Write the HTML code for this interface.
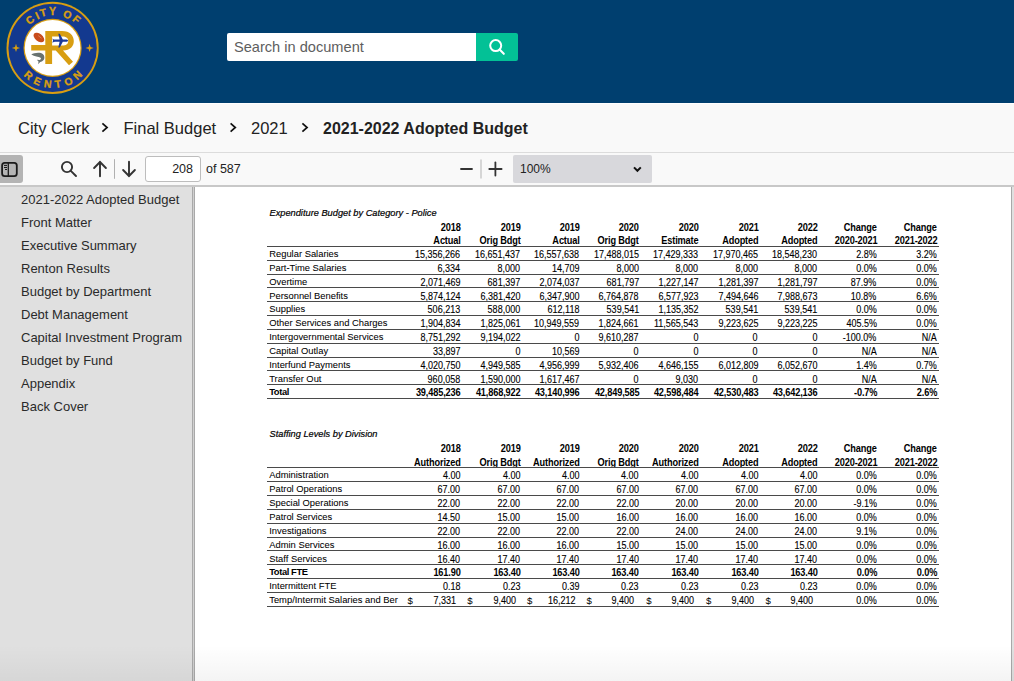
<!DOCTYPE html>
<html><head><meta charset="utf-8">
<style>
*{box-sizing:border-box}
html,body{margin:0;padding:0}
body{width:1014px;height:681px;overflow:hidden;position:relative;background:#fff;font-family:"Liberation Sans",sans-serif}
#hdr{position:absolute;left:0;top:0;width:1014px;height:103px;background:#003f6f}
#logo{position:absolute;left:0;top:0;width:106px;height:96px}
#sbox{position:absolute;left:227px;top:33px;width:249px;height:28px;background:#fff;border-radius:2px 0 0 2px}
#sbox span{position:absolute;left:7px;top:6px;font-size:14.6px;color:#5e5e5e;white-space:nowrap}
#sbtn{position:absolute;left:476px;top:33px;width:42px;height:28px;background:#03c196;border-radius:0 2px 2px 0}
#crumb{position:absolute;left:0;top:103px;width:1014px;height:49px;background:#f9f9f9;border-top:1px solid #fff}
#crumbline{position:absolute;left:0;top:152px;width:1014px;height:1px;background:#dcdcdc}
.cr{position:absolute;top:119.3px;font-size:16.5px;color:#222;white-space:nowrap}
.cr.bd{font-weight:bold;font-size:16px;top:119.8px}
.chev{position:absolute;top:127px;width:6px;height:6px;border-right:1.6px solid #222;border-top:1.6px solid #222;transform:rotate(45deg)}
#tb{position:absolute;left:0;top:153px;width:1014px;height:32px;background:#f9f9f9}
#tbline{position:absolute;left:0;top:185px;width:1014px;height:2px;background:#c8c8c8}
#sbt{position:absolute;left:0;top:155px;width:23px;height:28px;background:#b4b4b4;border-radius:0 3px 3px 0}
#pg{position:absolute;left:145px;top:156px;width:56px;height:26px;background:#fff;border:1px solid #bdbdbd;border-radius:3px}
#pg span{position:absolute;right:7px;top:4.5px;font-size:12.5px;color:#222}
#of{position:absolute;left:206px;top:162px;font-size:12.5px;color:#222}
#zm{position:absolute;left:513px;top:155px;width:139px;height:28px;background:#d8d8dc;border-radius:2px}
#zm span{position:absolute;left:8px;top:7px;font-size:12px;color:#222}
#side{position:absolute;left:0;top:187px;width:192px;height:494px;background:#e0e0e0}
#sl1{position:absolute;left:192px;top:187px;width:1px;height:494px;background:#a9a9a9}
#sl2{position:absolute;left:193px;top:187px;width:1px;height:494px;background:#d0d0d0}
#sl3{position:absolute;left:194px;top:187px;width:1px;height:494px;background:#a9a9a9}
#rl1{position:absolute;left:1011px;top:187px;width:1px;height:494px;background:#a9a9a9}
#rl2{position:absolute;left:1012px;top:187px;width:2px;height:494px;background:#e0e0e0}
.si{position:absolute;left:21px;font-size:13px;color:#2a2a2a;white-space:nowrap}
#paper{position:absolute;left:195px;top:187px;width:816px;height:494px;background:#fff;overflow:hidden}
.c{position:absolute;font-size:10px;line-height:11px;color:#000;white-space:nowrap;letter-spacing:0;-webkit-text-stroke:0.12px #000;transform:scaleX(0.9);transform-origin:100% 50%;margin-top:1px;margin-right:-0.5px}
.c.l{font-size:9.4px;letter-spacing:0;-webkit-text-stroke:0.05px #000;transform:none;margin-top:0;margin-left:-0.8px}
.c.b{font-weight:bold;letter-spacing:-0.15px;-webkit-text-stroke:0;transform:scaleX(0.92);margin-right:-0.9px}
.c.d{transform:none;font-size:9.6px;-webkit-text-stroke:0}
.c.l.b{transform:none;letter-spacing:-0.4px;font-size:9.4px;-webkit-text-stroke:0;margin-top:-0.4px;margin-left:-0.8px}
.ttl{position:absolute;left:269.5px;font-size:9.25px;line-height:11px;font-style:italic;color:#000;-webkit-text-stroke:0.2px #000;white-space:nowrap}
.ln{position:absolute;left:267px;width:672px;height:1px;background:#4a4a4a}
</style></head><body>
<div id="hdr"></div>
<svg id="logo" width="106" height="96" viewBox="0 0 106 96">
  <circle cx="52.6" cy="47.9" r="46.1" fill="#d89e12"/>
  <circle cx="52.6" cy="47.9" r="44.2" fill="#13398f"/>
  <circle cx="52.6" cy="47.9" r="29.1" fill="#d89e12"/>
  <circle cx="52.6" cy="47.9" r="27.9" fill="#fff"/>
  <g font-family="Liberation Sans" font-weight="bold" font-size="10.5" fill="#d89e12" stroke="#d89e12" stroke-width="0.35" text-anchor="middle">
<text x="30" y="23.45" transform="rotate(-38.7 30 19.7)">C</text>
<text x="37.2" y="19.25" transform="rotate(-25.4 37.2 15.5)">I</text>
<text x="43.1" y="16.35" transform="rotate(-15.1 43.1 12.6)">T</text>
<text x="52.6" y="14.95" transform="rotate(0.0 52.6 11.2)">Y</text>
<text x="67.6" y="18.25" transform="rotate(24.2 67.6 14.5)">O</text>
<text x="76.7" y="23.05" transform="rotate(40.1 76.7 19.3)">F</text>
<text x="28.6" y="78.95" transform="rotate(41.3 28.6 75.2)">R</text>
<text x="37.5" y="84.85" transform="rotate(24.5 37.5 81.1)">E</text>
<text x="47.8" y="87.65" transform="rotate(7.6 47.8 83.9)">N</text>
<text x="58" y="87.65" transform="rotate(-8.5 58 83.9)">T</text>
<text x="68.3" y="85.05" transform="rotate(-25.2 68.3 81.3)">O</text>
<text x="77.5" y="78.85" transform="rotate(-42.5 77.5 75.1)">N</text>
  </g>
  <path d="M16 43.7 L17 46.9 L20.2 47.9 L17 48.9 L16 52.1 L15 48.9 L11.8 47.9 L15 46.9 Z" fill="#d89e12"/>
  <path d="M89.6 43.7 L90.6 46.9 L93.8 47.9 L90.6 48.9 L89.6 52.1 L88.6 48.9 L85.4 47.9 L88.6 46.9 Z" fill="#d89e12"/>
  <path fill="#d89e12" d="M45.3 30.9 L62 30.9 C70 30.9 73.8 35.5 73.8 41 C73.8 46.3 70.3 50.4 63 50.5 L73 61.8 L69 65.2 L55.8 50.5 L52.1 50.5 L52.1 63.9 L45.3 63.9 L45.3 50.4 L31.2 50.4 L31.2 45 L45.3 45 Z M52.1 36.5 L52.1 45.6 L62 45.6 C66.5 45.6 68.2 43.8 68.2 41 C68.2 38.2 66.5 36.5 62 36.5 Z"/>
  <path fill="#1b3a9a" d="M52.4 38.6 L53.8 39.4 L55 39.5 L59.6 39.5 L58.3 33.8 L59.8 33.8 L62.8 39.5 L66.8 39.6 C68.5 39.9 68.5 41.5 66.8 41.7 L62.8 41.8 L59.8 47.5 L58.3 47.5 L59.6 41.8 L55 41.8 L53.8 41.9 L52.4 42.7 L53.1 40.6 Z"/>
  <ellipse cx="38.9" cy="37.5" rx="6.2" ry="3.7" transform="rotate(38 38.9 37.5)" fill="#c84c1b"/>
  <path d="M38.2 35.6 L41.5 38.2" stroke="#e9a080" stroke-width="0.6"/>
  <path fill="#687270" d="M31.3 54.5 C33.5 53 37.5 52.2 41 53 C43.8 53.8 44.8 56.5 44.3 58.6 C43.8 60.3 42.6 61.3 41.2 61.8 L40.2 62.1 L38.2 64.2 L38.5 61.5 L36.8 59.8 L39.8 60.1 C41 59.3 41.2 58.3 40.6 57.7 C38.5 56.7 34.5 56.5 31.3 54.5 Z"/>
</svg>
<div id="sbox"><span>Search in document</span></div>
<div id="sbtn"><svg width="42" height="28" viewBox="0 0 42 28"><circle cx="19.7" cy="12.6" r="5.5" fill="none" stroke="#fff" stroke-width="2"/><line x1="23.6" y1="16.6" x2="27.8" y2="20.8" stroke="#fff" stroke-width="2.1" stroke-linecap="round"/></svg></div>

<div id="crumb"></div>
<div id="crumbline"></div>
<div class="cr" style="left:18px">City Clerk</div>
<div class="cr" style="left:123.5px">Final Budget</div>
<div class="cr" style="left:251px">2021</div>
<svg style="position:absolute;left:0;top:110px" width="340" height="40" viewBox="0 110 340 40"><polyline points="102.4,123.4 107.1,127.5 102.4,131.6" fill="none" stroke="#111" stroke-width="1.7"/><polyline points="230.6,123.4 235.3,127.5 230.6,131.6" fill="none" stroke="#111" stroke-width="1.7"/><polyline points="302.4,123.4 307.1,127.5 302.4,131.6" fill="none" stroke="#111" stroke-width="1.7"/></svg>
<div class="cr bd" style="left:323px">2021-2022 Adopted Budget</div>

<div id="tb"></div>
<div id="tbline"></div>
<div id="sbt"><svg width="23" height="28" viewBox="0 0 23 28"><rect x="2.1" y="7.9" width="14.7" height="13.3" rx="2.6" fill="none" stroke="#1a1a1a" stroke-width="1.8"/><line x1="8.3" y1="8" x2="8.3" y2="21.2" stroke="#1a1a1a" stroke-width="1.3"/><line x1="4" y1="10.4" x2="7" y2="10.4" stroke="#1a1a1a" stroke-width="1.1"/><line x1="4" y1="12.5" x2="7" y2="12.5" stroke="#1a1a1a" stroke-width="1.1"/><line x1="5" y1="14.5" x2="7" y2="14.5" stroke="#1a1a1a" stroke-width="1.1"/></svg></div>
<svg style="position:absolute;left:55px;top:155px" width="90" height="28" viewBox="0 0 90 28">
  <circle cx="12" cy="12" r="5.1" fill="none" stroke="#333" stroke-width="1.9"/>
  <line x1="15.8" y1="15.8" x2="21" y2="21" stroke="#333" stroke-width="1.9" stroke-linecap="round"/>
  <path d="M45 6.8 L45 21.3 M39.1 13 L45 7 L50.9 13" fill="none" stroke="#333" stroke-width="1.9" stroke-linecap="round" stroke-linejoin="round"/>
  <line x1="59.5" y1="4.2" x2="59.5" y2="23.8" stroke="#b0b0b0" stroke-width="1"/>
  <path d="M74 6.8 L74 21.2 M68.1 15 L74 21 L79.9 15" fill="none" stroke="#333" stroke-width="1.9" stroke-linecap="round" stroke-linejoin="round"/>
</svg>
<div id="pg"><span>208</span></div>
<div id="of">of 587</div>
<svg style="position:absolute;left:455px;top:155px" width="56" height="28" viewBox="0 0 56 28">
  <line x1="6" y1="14" x2="17" y2="14" stroke="#333" stroke-width="1.8" stroke-linecap="round"/>
  <line x1="26" y1="4.5" x2="26" y2="23.5" stroke="#cdcdcd" stroke-width="1.6"/>
  <line x1="34.3" y1="14" x2="46.6" y2="14" stroke="#333" stroke-width="1.8" stroke-linecap="round"/>
  <line x1="40.4" y1="7.5" x2="40.4" y2="20.6" stroke="#333" stroke-width="1.8" stroke-linecap="round"/>
</svg>
<div id="zm"><span style="left:7px">100%</span><svg style="position:absolute;left:119px;top:10px" width="12" height="8" viewBox="0 0 12 8"><path d="M2 2.4 L5.4 5.8 L8.8 2.4" fill="none" stroke="#111" stroke-width="2"/></svg></div>

<div id="side"></div>
<div id="sl1"></div><div id="sl2"></div><div id="sl3"></div>
<div class="si" style="top:192px">2021-2022 Adopted Budget</div>
<div class="si" style="top:215px">Front Matter</div>
<div class="si" style="top:238px">Executive Summary</div>
<div class="si" style="top:261px">Renton Results</div>
<div class="si" style="top:284px">Budget by Department</div>
<div class="si" style="top:307px">Debt Management</div>
<div class="si" style="top:330px">Capital Investment Program</div>
<div class="si" style="top:353px">Budget by Fund</div>
<div class="si" style="top:376px">Appendix</div>
<div class="si" style="top:399px">Back Cover</div>
<div id="paper"></div>
<div id="rl1"></div><div id="rl2"></div>
<div class="ttl" style="top:208.3px">Expenditure Budget by Category - Police</div>
<div class="c b" style="right:554px;top:220.5px">2018</div>
<div class="c b" style="right:554px;top:234.3px">Actual</div>
<div class="c b" style="right:494.4px;top:220.5px">2019</div>
<div class="c b" style="right:494.4px;top:234.3px">Orig Bdgt</div>
<div class="c b" style="right:435.20000000000005px;top:220.5px">2019</div>
<div class="c b" style="right:435.20000000000005px;top:234.3px">Actual</div>
<div class="c b" style="right:375.79999999999995px;top:220.5px">2020</div>
<div class="c b" style="right:375.79999999999995px;top:234.3px">Orig Bdgt</div>
<div class="c b" style="right:316.29999999999995px;top:220.5px">2020</div>
<div class="c b" style="right:316.29999999999995px;top:234.3px">Estimate</div>
<div class="c b" style="right:256.5px;top:220.5px">2021</div>
<div class="c b" style="right:256.5px;top:234.3px">Adopted</div>
<div class="c b" style="right:197px;top:220.5px">2022</div>
<div class="c b" style="right:197px;top:234.3px">Adopted</div>
<div class="c b" style="right:137.79999999999995px;top:220.5px">Change</div>
<div class="c b" style="right:137.79999999999995px;top:234.3px">2020-2021</div>
<div class="c b" style="right:77.70000000000005px;top:220.5px">Change</div>
<div class="c b" style="right:77.70000000000005px;top:234.3px">2021-2022</div>
<div class="ln" style="top:245.9px"></div>
<div class="c l" style="left:270px;top:248.1px">Regular Salaries</div>
<div class="c" style="right:554px;top:248.1px">15,356,266</div>
<div class="c" style="right:494.4px;top:248.1px">16,651,437</div>
<div class="c" style="right:435.20000000000005px;top:248.1px">16,557,638</div>
<div class="c" style="right:375.79999999999995px;top:248.1px">17,488,015</div>
<div class="c" style="right:316.29999999999995px;top:248.1px">17,429,333</div>
<div class="c" style="right:256.5px;top:248.1px">17,970,465</div>
<div class="c" style="right:197px;top:248.1px">18,548,230</div>
<div class="c" style="right:137.79999999999995px;top:248.1px">2.8%</div>
<div class="c" style="right:77.70000000000005px;top:248.1px">3.2%</div>
<div class="ln" style="top:259.7px"></div>
<div class="c l" style="left:270px;top:261.9px">Part-Time Salaries</div>
<div class="c" style="right:554px;top:261.9px">6,334</div>
<div class="c" style="right:494.4px;top:261.9px">8,000</div>
<div class="c" style="right:435.20000000000005px;top:261.9px">14,709</div>
<div class="c" style="right:375.79999999999995px;top:261.9px">8,000</div>
<div class="c" style="right:316.29999999999995px;top:261.9px">8,000</div>
<div class="c" style="right:256.5px;top:261.9px">8,000</div>
<div class="c" style="right:197px;top:261.9px">8,000</div>
<div class="c" style="right:137.79999999999995px;top:261.9px">0.0%</div>
<div class="c" style="right:77.70000000000005px;top:261.9px">0.0%</div>
<div class="ln" style="top:273.5px"></div>
<div class="c l" style="left:270px;top:275.7px">Overtime</div>
<div class="c" style="right:554px;top:275.7px">2,071,469</div>
<div class="c" style="right:494.4px;top:275.7px">681,397</div>
<div class="c" style="right:435.20000000000005px;top:275.7px">2,074,037</div>
<div class="c" style="right:375.79999999999995px;top:275.7px">681,797</div>
<div class="c" style="right:316.29999999999995px;top:275.7px">1,227,147</div>
<div class="c" style="right:256.5px;top:275.7px">1,281,397</div>
<div class="c" style="right:197px;top:275.7px">1,281,797</div>
<div class="c" style="right:137.79999999999995px;top:275.7px">87.9%</div>
<div class="c" style="right:77.70000000000005px;top:275.7px">0.0%</div>
<div class="ln" style="top:287.4px"></div>
<div class="c l" style="left:270px;top:289.6px">Personnel Benefits</div>
<div class="c" style="right:554px;top:289.6px">5,874,124</div>
<div class="c" style="right:494.4px;top:289.6px">6,381,420</div>
<div class="c" style="right:435.20000000000005px;top:289.6px">6,347,900</div>
<div class="c" style="right:375.79999999999995px;top:289.6px">6,764,878</div>
<div class="c" style="right:316.29999999999995px;top:289.6px">6,577,923</div>
<div class="c" style="right:256.5px;top:289.6px">7,494,646</div>
<div class="c" style="right:197px;top:289.6px">7,988,673</div>
<div class="c" style="right:137.79999999999995px;top:289.6px">10.8%</div>
<div class="c" style="right:77.70000000000005px;top:289.6px">6.6%</div>
<div class="ln" style="top:301.2px"></div>
<div class="c l" style="left:270px;top:303.4px">Supplies</div>
<div class="c" style="right:554px;top:303.4px">506,213</div>
<div class="c" style="right:494.4px;top:303.4px">588,000</div>
<div class="c" style="right:435.20000000000005px;top:303.4px">612,118</div>
<div class="c" style="right:375.79999999999995px;top:303.4px">539,541</div>
<div class="c" style="right:316.29999999999995px;top:303.4px">1,135,352</div>
<div class="c" style="right:256.5px;top:303.4px">539,541</div>
<div class="c" style="right:197px;top:303.4px">539,541</div>
<div class="c" style="right:137.79999999999995px;top:303.4px">0.0%</div>
<div class="c" style="right:77.70000000000005px;top:303.4px">0.0%</div>
<div class="ln" style="top:315.0px"></div>
<div class="c l" style="left:270px;top:317.2px">Other Services and Charges</div>
<div class="c" style="right:554px;top:317.2px">1,904,834</div>
<div class="c" style="right:494.4px;top:317.2px">1,825,061</div>
<div class="c" style="right:435.20000000000005px;top:317.2px">10,949,559</div>
<div class="c" style="right:375.79999999999995px;top:317.2px">1,824,661</div>
<div class="c" style="right:316.29999999999995px;top:317.2px">11,565,543</div>
<div class="c" style="right:256.5px;top:317.2px">9,223,625</div>
<div class="c" style="right:197px;top:317.2px">9,223,225</div>
<div class="c" style="right:137.79999999999995px;top:317.2px">405.5%</div>
<div class="c" style="right:77.70000000000005px;top:317.2px">0.0%</div>
<div class="ln" style="top:328.8px"></div>
<div class="c l" style="left:270px;top:331.0px">Intergovernmental Services</div>
<div class="c" style="right:554px;top:331.0px">8,751,292</div>
<div class="c" style="right:494.4px;top:331.0px">9,194,022</div>
<div class="c" style="right:435.20000000000005px;top:331.0px">0</div>
<div class="c" style="right:375.79999999999995px;top:331.0px">9,610,287</div>
<div class="c" style="right:316.29999999999995px;top:331.0px">0</div>
<div class="c" style="right:256.5px;top:331.0px">0</div>
<div class="c" style="right:197px;top:331.0px">0</div>
<div class="c" style="right:137.79999999999995px;top:331.0px">-100.0%</div>
<div class="c" style="right:77.70000000000005px;top:331.0px">N/A</div>
<div class="ln" style="top:342.6px"></div>
<div class="c l" style="left:270px;top:344.8px">Capital Outlay</div>
<div class="c" style="right:554px;top:344.8px">33,897</div>
<div class="c" style="right:494.4px;top:344.8px">0</div>
<div class="c" style="right:435.20000000000005px;top:344.8px">10,569</div>
<div class="c" style="right:375.79999999999995px;top:344.8px">0</div>
<div class="c" style="right:316.29999999999995px;top:344.8px">0</div>
<div class="c" style="right:256.5px;top:344.8px">0</div>
<div class="c" style="right:197px;top:344.8px">0</div>
<div class="c" style="right:137.79999999999995px;top:344.8px">N/A</div>
<div class="c" style="right:77.70000000000005px;top:344.8px">N/A</div>
<div class="ln" style="top:356.5px"></div>
<div class="c l" style="left:270px;top:358.7px">Interfund Payments</div>
<div class="c" style="right:554px;top:358.7px">4,020,750</div>
<div class="c" style="right:494.4px;top:358.7px">4,949,585</div>
<div class="c" style="right:435.20000000000005px;top:358.7px">4,956,999</div>
<div class="c" style="right:375.79999999999995px;top:358.7px">5,932,406</div>
<div class="c" style="right:316.29999999999995px;top:358.7px">4,646,155</div>
<div class="c" style="right:256.5px;top:358.7px">6,012,809</div>
<div class="c" style="right:197px;top:358.7px">6,052,670</div>
<div class="c" style="right:137.79999999999995px;top:358.7px">1.4%</div>
<div class="c" style="right:77.70000000000005px;top:358.7px">0.7%</div>
<div class="ln" style="top:370.3px"></div>
<div class="c l" style="left:270px;top:372.5px">Transfer Out</div>
<div class="c" style="right:554px;top:372.5px">960,058</div>
<div class="c" style="right:494.4px;top:372.5px">1,590,000</div>
<div class="c" style="right:435.20000000000005px;top:372.5px">1,617,467</div>
<div class="c" style="right:375.79999999999995px;top:372.5px">0</div>
<div class="c" style="right:316.29999999999995px;top:372.5px">9,030</div>
<div class="c" style="right:256.5px;top:372.5px">0</div>
<div class="c" style="right:197px;top:372.5px">0</div>
<div class="c" style="right:137.79999999999995px;top:372.5px">N/A</div>
<div class="c" style="right:77.70000000000005px;top:372.5px">N/A</div>
<div class="ln" style="top:384.1px"></div>
<div class="c l b" style="left:270px;top:386.3px">Total</div>
<div class="c b" style="right:554px;top:386.3px">39,485,236</div>
<div class="c b" style="right:494.4px;top:386.3px">41,868,922</div>
<div class="c b" style="right:435.20000000000005px;top:386.3px">43,140,996</div>
<div class="c b" style="right:375.79999999999995px;top:386.3px">42,849,585</div>
<div class="c b" style="right:316.29999999999995px;top:386.3px">42,598,484</div>
<div class="c b" style="right:256.5px;top:386.3px">42,530,483</div>
<div class="c b" style="right:197px;top:386.3px">43,642,136</div>
<div class="c b" style="right:137.79999999999995px;top:386.3px">-0.7%</div>
<div class="c b" style="right:77.70000000000005px;top:386.3px">2.6%</div>
<div class="ln" style="top:397.9px"></div>
<div class="ttl" style="top:429.29999999999995px">Staffing Levels by Division</div>
<div class="c b" style="right:554px;top:441.7px">2018</div>
<div class="c b" style="right:554px;top:455.5px">Authorized</div>
<div class="c b" style="right:494.4px;top:441.7px">2019</div>
<div class="c b" style="right:494.4px;top:455.5px">Orig Bdgt</div>
<div class="c b" style="right:435.20000000000005px;top:441.7px">2019</div>
<div class="c b" style="right:435.20000000000005px;top:455.5px">Authorized</div>
<div class="c b" style="right:375.79999999999995px;top:441.7px">2020</div>
<div class="c b" style="right:375.79999999999995px;top:455.5px">Orig Bdgt</div>
<div class="c b" style="right:316.29999999999995px;top:441.7px">2020</div>
<div class="c b" style="right:316.29999999999995px;top:455.5px">Authorized</div>
<div class="c b" style="right:256.5px;top:441.7px">2021</div>
<div class="c b" style="right:256.5px;top:455.5px">Adopted</div>
<div class="c b" style="right:197px;top:441.7px">2022</div>
<div class="c b" style="right:197px;top:455.5px">Adopted</div>
<div class="c b" style="right:137.79999999999995px;top:441.7px">Change</div>
<div class="c b" style="right:137.79999999999995px;top:455.5px">2020-2021</div>
<div class="c b" style="right:77.70000000000005px;top:441.7px">Change</div>
<div class="c b" style="right:77.70000000000005px;top:455.5px">2021-2022</div>
<div class="ln" style="top:467.1px"></div>
<div class="c l" style="left:270px;top:469.3px">Administration</div>
<div class="c" style="right:554px;top:469.3px">4.00</div>
<div class="c" style="right:494.4px;top:469.3px">4.00</div>
<div class="c" style="right:435.20000000000005px;top:469.3px">4.00</div>
<div class="c" style="right:375.79999999999995px;top:469.3px">4.00</div>
<div class="c" style="right:316.29999999999995px;top:469.3px">4.00</div>
<div class="c" style="right:256.5px;top:469.3px">4.00</div>
<div class="c" style="right:197px;top:469.3px">4.00</div>
<div class="c" style="right:137.79999999999995px;top:469.3px">0.0%</div>
<div class="c" style="right:77.70000000000005px;top:469.3px">0.0%</div>
<div class="ln" style="top:481.0px"></div>
<div class="c l" style="left:270px;top:483.2px">Patrol Operations</div>
<div class="c" style="right:554px;top:483.2px">67.00</div>
<div class="c" style="right:494.4px;top:483.2px">67.00</div>
<div class="c" style="right:435.20000000000005px;top:483.2px">67.00</div>
<div class="c" style="right:375.79999999999995px;top:483.2px">67.00</div>
<div class="c" style="right:316.29999999999995px;top:483.2px">67.00</div>
<div class="c" style="right:256.5px;top:483.2px">67.00</div>
<div class="c" style="right:197px;top:483.2px">67.00</div>
<div class="c" style="right:137.79999999999995px;top:483.2px">0.0%</div>
<div class="c" style="right:77.70000000000005px;top:483.2px">0.0%</div>
<div class="ln" style="top:494.8px"></div>
<div class="c l" style="left:270px;top:497.0px">Special Operations</div>
<div class="c" style="right:554px;top:497.0px">22.00</div>
<div class="c" style="right:494.4px;top:497.0px">22.00</div>
<div class="c" style="right:435.20000000000005px;top:497.0px">22.00</div>
<div class="c" style="right:375.79999999999995px;top:497.0px">22.00</div>
<div class="c" style="right:316.29999999999995px;top:497.0px">20.00</div>
<div class="c" style="right:256.5px;top:497.0px">20.00</div>
<div class="c" style="right:197px;top:497.0px">20.00</div>
<div class="c" style="right:137.79999999999995px;top:497.0px">-9.1%</div>
<div class="c" style="right:77.70000000000005px;top:497.0px">0.0%</div>
<div class="ln" style="top:508.7px"></div>
<div class="c l" style="left:270px;top:510.9px">Patrol Services</div>
<div class="c" style="right:554px;top:510.9px">14.50</div>
<div class="c" style="right:494.4px;top:510.9px">15.00</div>
<div class="c" style="right:435.20000000000005px;top:510.9px">15.00</div>
<div class="c" style="right:375.79999999999995px;top:510.9px">16.00</div>
<div class="c" style="right:316.29999999999995px;top:510.9px">16.00</div>
<div class="c" style="right:256.5px;top:510.9px">16.00</div>
<div class="c" style="right:197px;top:510.9px">16.00</div>
<div class="c" style="right:137.79999999999995px;top:510.9px">0.0%</div>
<div class="c" style="right:77.70000000000005px;top:510.9px">0.0%</div>
<div class="ln" style="top:522.6px"></div>
<div class="c l" style="left:270px;top:524.8px">Investigations</div>
<div class="c" style="right:554px;top:524.8px">22.00</div>
<div class="c" style="right:494.4px;top:524.8px">22.00</div>
<div class="c" style="right:435.20000000000005px;top:524.8px">22.00</div>
<div class="c" style="right:375.79999999999995px;top:524.8px">22.00</div>
<div class="c" style="right:316.29999999999995px;top:524.8px">24.00</div>
<div class="c" style="right:256.5px;top:524.8px">24.00</div>
<div class="c" style="right:197px;top:524.8px">24.00</div>
<div class="c" style="right:137.79999999999995px;top:524.8px">9.1%</div>
<div class="c" style="right:77.70000000000005px;top:524.8px">0.0%</div>
<div class="ln" style="top:536.5px"></div>
<div class="c l" style="left:270px;top:538.7px">Admin Services</div>
<div class="c" style="right:554px;top:538.7px">16.00</div>
<div class="c" style="right:494.4px;top:538.7px">16.00</div>
<div class="c" style="right:435.20000000000005px;top:538.7px">16.00</div>
<div class="c" style="right:375.79999999999995px;top:538.7px">15.00</div>
<div class="c" style="right:316.29999999999995px;top:538.7px">15.00</div>
<div class="c" style="right:256.5px;top:538.7px">15.00</div>
<div class="c" style="right:197px;top:538.7px">15.00</div>
<div class="c" style="right:137.79999999999995px;top:538.7px">0.0%</div>
<div class="c" style="right:77.70000000000005px;top:538.7px">0.0%</div>
<div class="ln" style="top:550.3px"></div>
<div class="c l" style="left:270px;top:552.5px">Staff Services</div>
<div class="c" style="right:554px;top:552.5px">16.40</div>
<div class="c" style="right:494.4px;top:552.5px">17.40</div>
<div class="c" style="right:435.20000000000005px;top:552.5px">17.40</div>
<div class="c" style="right:375.79999999999995px;top:552.5px">17.40</div>
<div class="c" style="right:316.29999999999995px;top:552.5px">17.40</div>
<div class="c" style="right:256.5px;top:552.5px">17.40</div>
<div class="c" style="right:197px;top:552.5px">17.40</div>
<div class="c" style="right:137.79999999999995px;top:552.5px">0.0%</div>
<div class="c" style="right:77.70000000000005px;top:552.5px">0.0%</div>
<div class="ln" style="top:564.2px"></div>
<div class="c l b" style="left:270px;top:566.4px">Total FTE</div>
<div class="c b" style="right:554px;top:566.4px">161.90</div>
<div class="c b" style="right:494.4px;top:566.4px">163.40</div>
<div class="c b" style="right:435.20000000000005px;top:566.4px">163.40</div>
<div class="c b" style="right:375.79999999999995px;top:566.4px">163.40</div>
<div class="c b" style="right:316.29999999999995px;top:566.4px">163.40</div>
<div class="c b" style="right:256.5px;top:566.4px">163.40</div>
<div class="c b" style="right:197px;top:566.4px">163.40</div>
<div class="c b" style="right:137.79999999999995px;top:566.4px">0.0%</div>
<div class="c b" style="right:77.70000000000005px;top:566.4px">0.0%</div>
<div class="ln" style="top:578.1px"></div>
<div class="c l" style="left:270px;top:580.3px">Intermittent FTE</div>
<div class="c" style="right:554px;top:580.3px">0.18</div>
<div class="c" style="right:494.4px;top:580.3px">0.23</div>
<div class="c" style="right:435.20000000000005px;top:580.3px">0.39</div>
<div class="c" style="right:375.79999999999995px;top:580.3px">0.23</div>
<div class="c" style="right:316.29999999999995px;top:580.3px">0.23</div>
<div class="c" style="right:256.5px;top:580.3px">0.23</div>
<div class="c" style="right:197px;top:580.3px">0.23</div>
<div class="c" style="right:137.79999999999995px;top:580.3px">0.0%</div>
<div class="c" style="right:77.70000000000005px;top:580.3px">0.0%</div>
<div class="ln" style="top:591.9px"></div>
<div class="c l" style="left:270px;top:594.1px">Temp/Intermit Salaries and Ber</div>
<div class="c" style="right:558.2px;top:594.1px">7,331</div>
<div class="c d" style="left:407.6px;top:594.1px">$</div>
<div class="c" style="right:498.6px;top:594.1px">9,400</div>
<div class="c d" style="left:467.2px;top:594.1px">$</div>
<div class="c" style="right:439.4px;top:594.1px">16,212</div>
<div class="c d" style="left:526.9px;top:594.1px">$</div>
<div class="c" style="right:380.0px;top:594.1px">9,400</div>
<div class="c d" style="left:586.5px;top:594.1px">$</div>
<div class="c" style="right:320.5px;top:594.1px">9,400</div>
<div class="c d" style="left:646.2px;top:594.1px">$</div>
<div class="c" style="right:260.7px;top:594.1px">9,400</div>
<div class="c d" style="left:705.9px;top:594.1px">$</div>
<div class="c" style="right:201.2px;top:594.1px">9,400</div>
<div class="c d" style="left:765.5px;top:594.1px">$</div>
<div class="c" style="right:137.79999999999995px;top:594.1px">0.0%</div>
<div class="c" style="right:77.70000000000005px;top:594.1px">0.0%</div>
<div class="ln" style="top:605.8px"></div>
<div style="position:absolute;left:0;top:645px;width:1014px;height:36px;background:linear-gradient(rgba(0,0,0,0),rgba(0,0,0,0.045))"></div>
</body></html>
